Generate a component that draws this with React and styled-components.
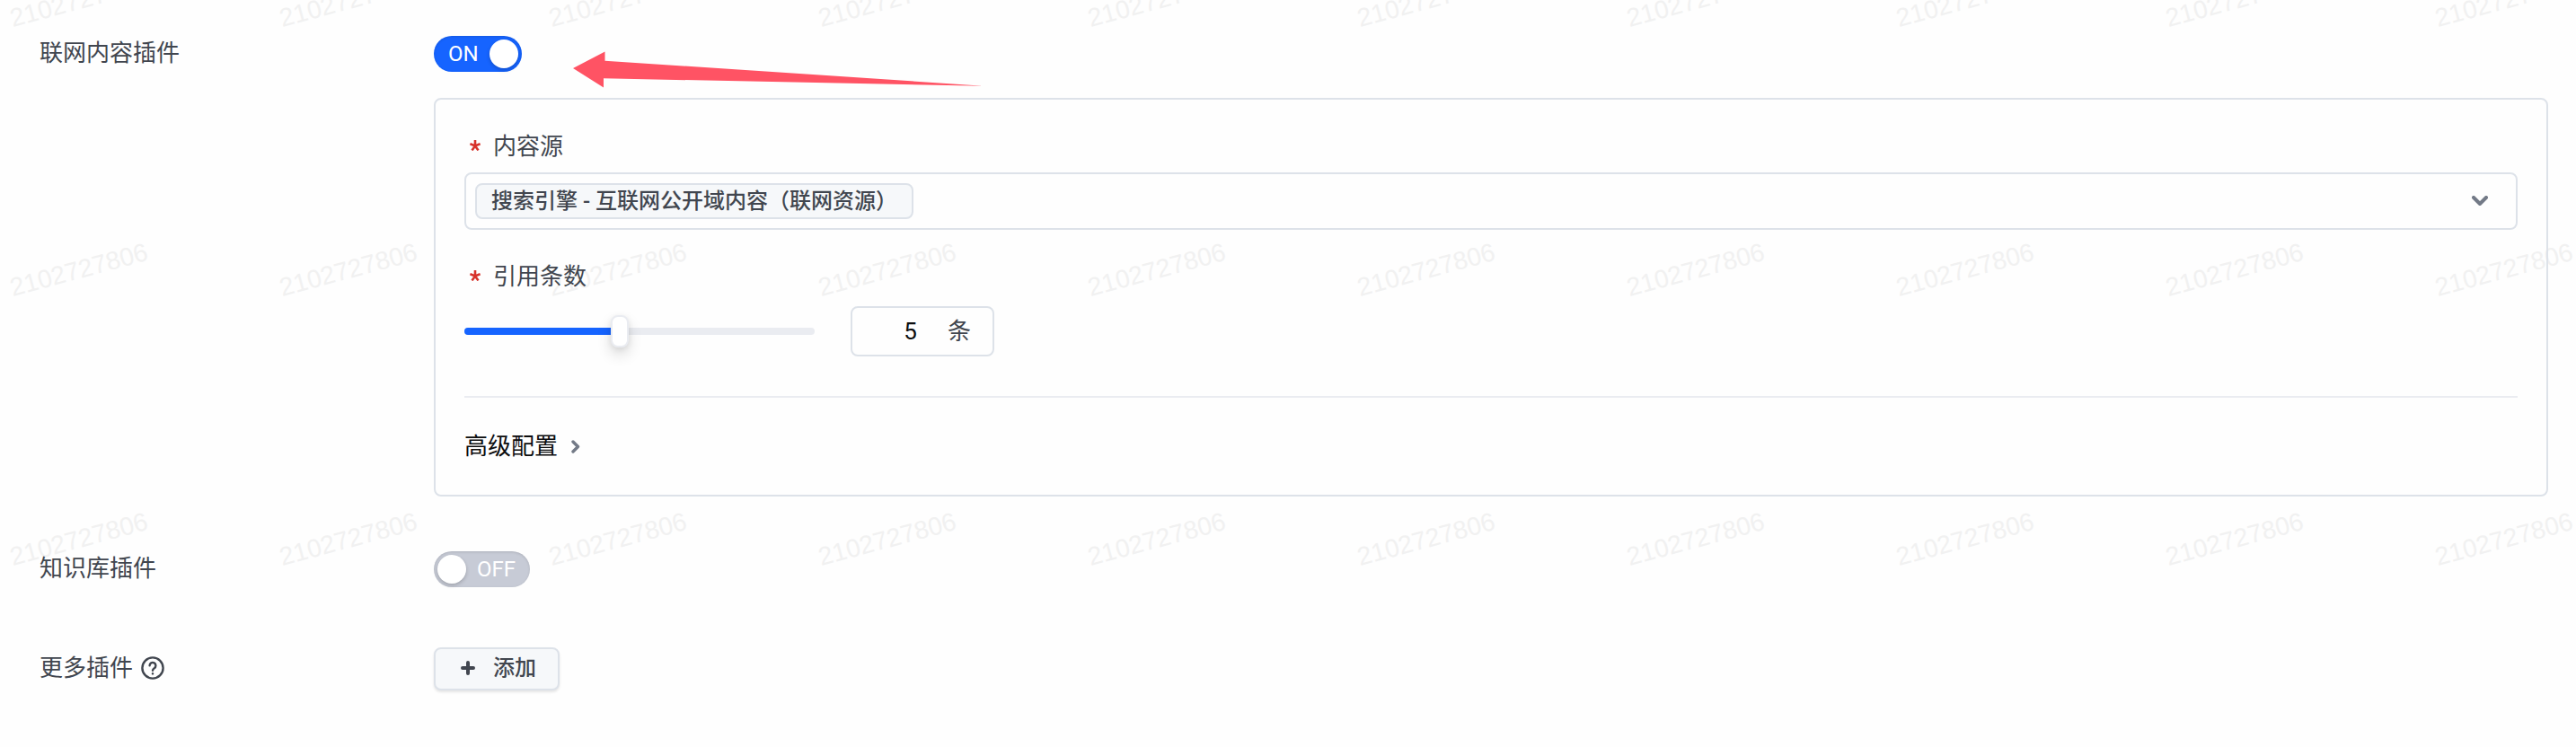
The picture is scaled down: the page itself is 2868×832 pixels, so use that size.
import React from "react";
import styled, { createGlobalStyle } from "styled-components";

const GlobalStyle = createGlobalStyle`
  * { box-sizing: border-box; }
  body {
    margin: 0;
    background: #fefefe;
    font-family: Roboto, "Noto Sans CJK SC", sans-serif;
    font-size: 26px;
    color: #41464f;
  }
`;

const Page = styled.main`
  position: relative;
  width: 2868px;
  height: 832px;
  overflow: hidden;
  padding: 40px 31px 0 44px;
`;

const Watermark = styled.div`
  position: absolute;
  inset: -300px 0 0 0;
  display: grid;
  grid-template-columns: repeat(10, 300px);
  grid-auto-rows: 300px;
  pointer-events: none;
`;

const Mark = styled.span`
  display: flex;
  align-items: flex-end;
  padding: 0 0 0 9px;
  font-family: "Liberation Sans", sans-serif;
  font-size: 28.3px;
  line-height: 32px;
  color: #f1f1f1;

  i {
    position: relative;
    top: 16px;
    font-style: normal;
    transform: rotate(-15deg);
  }
`;

const Form = styled.div`
  position: relative;
  display: flex;
  flex-direction: column;
`;

const FormRow = styled.section`
  display: flex;
  align-items: flex-start;
  margin-top: ${(p) => p.$gap || 0}px;
`;

const RowLabel = styled.label`
  display: flex;
  align-items: center;
  flex: 0 0 439px;
  height: ${(p) => p.$height}px;
  gap: 9px;
  white-space: nowrap;
`;

const LabelText = styled.span`
  padding-top: ${(p) => p.$drop || 0}px;
  padding-bottom: ${(p) => p.$lift || 0}px;
  line-height: 36px;
`;

const RowContent = styled.div`
  flex: 1;
  min-width: 0;
`;

const Switch = styled.div`
  display: flex;
  flex-direction: ${(p) => (p.$on ? "row" : "row-reverse")};
  align-items: center;
  justify-content: space-between;
  width: ${(p) => (p.$on ? 98 : 107)}px;
  height: 40px;
  padding: ${(p) => (p.$on ? "0 4px 0 16px" : "0 16px 0 4px")};
  border-radius: 20px;
  background: ${(p) => (p.$on ? "#1664ff" : "#c7cbd6")};
  box-shadow: inset 0 1px 3px rgba(0, 0, 0, 0.12);
  color: #fff;
  font-size: 24px;
  line-height: 40px;
`;

const Knob = styled.span`
  width: 32px;
  height: 32px;
  border-radius: 50%;
  background: #fff;
  box-shadow: 0 2px 4px rgba(0, 0, 0, 0.2);
`;

const Panel = styled.div`
  height: 444px;
  margin-top: 29px;
  padding: 32px;
  border: 2px solid #dde2e9;
  border-radius: 8px;
`;

const FieldLabel = styled.div`
  display: flex;
  align-items: center;
  height: 40px;
  margin-top: ${(p) => p.$gap || 0}px;
  padding: 0 0 2px 6px;
  gap: 14px;
`;

const Required = styled.svg`
  display: block;
  width: 12px;
  height: 12px;
  flex: none;
  fill: none;
  stroke: #d7312a;
  stroke-width: 2.6;
`;

const Select = styled.div`
  display: flex;
  align-items: center;
  justify-content: space-between;
  height: 64px;
  margin-top: 9px;
  padding: 0 31px 0 10px;
  border: 2px solid #dde2e9;
  border-radius: 8px;
`;

const Tag = styled.span`
  width: 488px;
  height: 40px;
  padding-left: 16px;
  border: 2px solid #dde2e9;
  border-radius: 8px;
  background: #f6f8fa;
  font-size: 24px;
  font-weight: 500;
  line-height: 37px;
  white-space: nowrap;
`;

const SliderRow = styled.div`
  display: flex;
  align-items: center;
  height: 56px;
  margin-top: 13px;
  gap: 40px;
`;

const Track = styled.div`
  display: flex;
  align-items: center;
  width: 390px;
  height: 8px;
  border-radius: 4px;
  background: #eaecf1;
`;

const Fill = styled.div`
  width: 163px;
  height: 8px;
  border-radius: 4px 0 0 4px;
  background: #1664ff;
`;

const Handle = styled.div`
  width: 20px;
  height: 36px;
  flex: none;
  border: 2px solid #eaecf1;
  border-radius: 8px;
  background: #fff;
  box-shadow: 0 8px 16px rgba(0, 0, 0, 0.14), 0 2px 6px rgba(0, 0, 0, 0.08);
`;

const NumberBox = styled.div`
  display: flex;
  align-items: center;
  justify-content: flex-end;
  width: 160px;
  height: 56px;
  padding: 0 24px 0 0;
  gap: 34px;
  border: 2px solid #dde2e9;
  border-radius: 8px;
  line-height: 40px;
`;

const Value = styled.span`
  color: #0c0d0e;
`;

const Divider = styled.hr`
  height: 2px;
  margin: 44px 0 0;
  border: 0;
  background: #eaecf1;
`;

const Advanced = styled.div`
  display: flex;
  align-items: center;
  height: 40px;
  margin-top: 34px;
  gap: 15px;
  color: #0c0d0e;
`;

const AddButton = styled.button`
  display: flex;
  align-items: center;
  width: 140px;
  height: 48px;
  padding: 0 0 2px 28px;
  gap: 20px;
  border: 2px solid #dde2e9;
  border-radius: 8px;
  background: #f6f8fa;
  box-shadow: 0 2px 3px rgba(0, 0, 0, 0.1);
  color: #41464f;
  font: 500 24px/40px Roboto, "Noto Sans CJK SC", sans-serif;
`;

const Icon = styled.svg`
  display: block;
  flex: none;
  fill: none;
  stroke: ${(p) => p.$color || "#41464f"};
  stroke-linecap: round;
  stroke-linejoin: round;
`;

const Arrow = styled.svg`
  position: absolute;
  left: 638px;
  top: 57px;
  fill: #ff5364;
`;

const RequiredMark = () => (
  <Required viewBox="0 0 12 12">
    <path d="M6 0v6.400M.4 4.300L6 6.400l5.600-2.100M2.500 11.400L6 6.400l3.500 5" />
  </Required>
);

const marks = Array.from({ length: 30 }, (_, i) => i);

export default function App() {
  return (
    <>
      <GlobalStyle />
      <Page>
        <Watermark aria-hidden="true">
          {marks.map((i) => (
            <Mark key={i}><i>2102727806</i></Mark>
          ))}
        </Watermark>
        <Form>
          <FormRow>
            <RowLabel $height={37}><LabelText>联网内容插件</LabelText></RowLabel>
            <RowContent>
              <Switch $on>
                <span>ON</span>
                <Knob />
              </Switch>
              <Panel>
                <FieldLabel>
                  <RequiredMark />
                  <LabelText $drop={2}>内容源</LabelText>
                </FieldLabel>
                <Select>
                  <Tag>搜索引擎 - 互联网公开域内容（联网资源）</Tag>
                  <Icon width="18" height="12" viewBox="0 0 18 12" strokeWidth="4" $color="#737a87">
                    <path d="M2 2l7 7 7-7" />
                  </Icon>
                </Select>
                <FieldLabel $gap={32}>
                  <RequiredMark />
                  <LabelText $drop={2}>引用条数</LabelText>
                </FieldLabel>
                <SliderRow>
                  <Track>
                    <Fill />
                    <Handle />
                  </Track>
                  <NumberBox>
                    <Value>5</Value>
                    <span>条</span>
                  </NumberBox>
                </SliderRow>
                <Divider />
                <Advanced>
                  <LabelText $lift={1}>高级配置</LabelText>
                  <Icon width="10" height="15" viewBox="0 0 10 15" strokeWidth="3.4" $color="#737a87">
                    <path d="M2 2l5.500 5.500L2 13" />
                  </Icon>
                </Advanced>
              </Panel>
            </RowContent>
          </FormRow>
          <FormRow $gap={61}>
            <RowLabel $height={37}><LabelText>知识库插件</LabelText></RowLabel>
            <RowContent>
              <Switch>
                <span>OFF</span>
                <Knob />
              </Switch>
            </RowContent>
          </FormRow>
          <FormRow $gap={67}>
            <RowLabel $height={46}>
              <LabelText>更多插件</LabelText>
              <Icon width="26" height="26" viewBox="0 0 26 26" strokeWidth="2.4">
                <circle cx="13" cy="13" r="11.6" />
                <path d="M9.600 10.300a3.400 3.400 0 1 1 5.200 2.900c-1.200.8-1.800 1.300-1.800 2.600" />
                <path d="M13 19.200v.2" />
              </Icon>
            </RowLabel>
            <RowContent>
              <AddButton>
                <Icon width="16" height="16" viewBox="0 0 16 16" strokeWidth="4">
                  <path d="M8 2v12M2 8h12" />
                </Icon>
                添加
              </AddButton>
            </RowContent>
          </FormRow>
        </Form>
        <Arrow width="458" height="41" viewBox="0 0 458 41">
          <path d="M0 19L35.500.5v10.200L456.500 38.700 34 30.300v10.200z" />
        </Arrow>
      </Page>
    </>
  );
}
